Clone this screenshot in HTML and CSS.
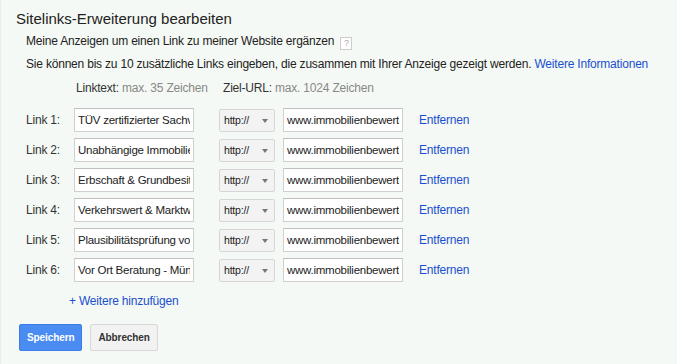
FILE: index.html
```html
<!DOCTYPE html>
<html lang="de">
<head>
    <meta charset="UTF-8">
    <title>Sitelinks-Erweiterung bearbeiten</title>
    <link rel="stylesheet" href="styles.css">
</head>
<body>
    <div class="panel">
        <h1>Sitelinks-Erweiterung bearbeiten</h1>
        <p class="intro">Meine Anzeigen um einen Link zu meiner Website ergänzen <span class="help">?</span></p>
        <p class="intro">Sie können bis zu 10 zusätzliche Links eingeben, die zusammen mit Ihrer Anzeige gezeigt werden. <a href="#">Weitere Informationen</a></p>

        <div class="links">
            <div class="hint hint-text"><b>Linktext:</b> max. 35 Zeichen</div>
            <div class="hint hint-url"><b>Ziel-URL:</b> max. 1024 Zeichen</div>

            <label>Link 1:</label>
            <input type="text" class="txt" value="TÜV zertifizierter Sachverständiger">
            <div class="sel">http://<span class="arrow"></span></div>
            <input type="text" class="txt" value="www.immobilienbewertung.de">
            <a href="#">Entfernen</a>

            <label>Link 2:</label>
            <input type="text" class="txt" value="Unabhängige Immobilienbewertung">
            <div class="sel">http://<span class="arrow"></span></div>
            <input type="text" class="txt" value="www.immobilienbewertung.de">
            <a href="#">Entfernen</a>

            <label>Link 3:</label>
            <input type="text" class="txt" value="Erbschaft &amp; Grundbesitz">
            <div class="sel">http://<span class="arrow"></span></div>
            <input type="text" class="txt" value="www.immobilienbewertung.de">
            <a href="#">Entfernen</a>

            <label>Link 4:</label>
            <input type="text" class="txt" value="Verkehrswert &amp; Marktwert">
            <div class="sel">http://<span class="arrow"></span></div>
            <input type="text" class="txt" value="www.immobilienbewertung.de">
            <a href="#">Entfernen</a>

            <label>Link 5:</label>
            <input type="text" class="txt" value="Plausibilitätsprüfung von Gutachten">
            <div class="sel">http://<span class="arrow"></span></div>
            <input type="text" class="txt" value="www.immobilienbewertung.de">
            <a href="#">Entfernen</a>

            <label>Link 6:</label>
            <input type="text" class="txt" value="Vor Ort Beratung - München">
            <div class="sel">http://<span class="arrow"></span></div>
            <input type="text" class="txt" value="www.immobilienbewertung.de">
            <a href="#">Entfernen</a>
        </div>

        <a href="#" class="add">+ Weitere hinzufügen</a>

        <div class="buttons">
            <button class="btn btn-blue">Speichern</button>
            <button class="btn">Abbrechen</button>
        </div>
    </div>
</body>
</html>
```

FILE: styles.css
```css
body {
    margin: 0;
    background: #fff;
    font-family: "Liberation Sans", Arial, sans-serif;
    color: #222;
}
a {
    color: #1a4fd0;
    text-decoration: none;
}
.panel {
    width: 677px;
    height: 364px;
    box-sizing: border-box;
    background: #f5f9f5;
    border-left: 1px solid #e9ede9;
    padding: 10px 0 0 15px;
    font-size: 12px;
    letter-spacing: -0.2px;
}
h1 {
    font-size: 15px;
    font-weight: normal;
    letter-spacing: 0;
    margin: 0 0 5px 0;
    line-height: 18px;
}
.intro {
    margin: 0 0 6px 10px;
    line-height: 16px;
}
.help {
    display: inline-block;
    width: 10px;
    height: 11px;
    border: 1px solid #ccc;
    background: #fff;
    color: #aaa;
    font-size: 9px;
    line-height: 11px;
    text-align: center;
    vertical-align: -1px;
    margin-left: 3px;
    letter-spacing: 0;
}
.links {
    display: grid;
    grid-template-columns: 48px 120px 25px 56px 8px 120px 16px auto;
    row-gap: 6px;
    margin: 9px 0 0 10px;
    align-items: center;
}
.hint {
    color: #888;
    margin-bottom: 3px;
    height: 18px;
}
.hint b {
    color: #333;
    font-weight: normal;
}
.hint-text {
    grid-column: 2 / 4;
    padding-left: 2px;
}
.hint-url {
    grid-column: 4 / 9;
    padding-left: 4px;
}
label {
    grid-column: 1;
    color: #333;
}
.links .txt:nth-of-type(odd) {
    grid-column: 2;
}
.txt {
    width: 120px;
    height: 24px;
    box-sizing: border-box;
    border: 1px solid #d0d0d0;
    border-top-color: #c0c0c0;
    background: #fff;
    font-family: "Liberation Sans", Arial, sans-serif;
    font-size: 11.5px;
    letter-spacing: -0.25px;
    color: #222;
    padding: 0 3px;
    margin: 0;
}
.txt + .sel + .txt {
    grid-column: 6;
}
.sel {
    grid-column: 4;
    height: 23px;
    box-sizing: border-box;
    border: 1px solid #d6d6d6;
    border-radius: 2px;
    background: #f3f3f3;
    font-size: 10.5px;
    line-height: 21px;
    padding-left: 4px;
    position: relative;
    color: #222;
}
.arrow {
    position: absolute;
    right: 6px;
    top: 9px;
    border-left: 3px solid transparent;
    border-right: 3px solid transparent;
    border-top: 4px solid #777;
}
.links a {
    grid-column: 8;
}
.add {
    display: inline-block;
    margin: 12px 0 0 53px;
}
.buttons {
    display: flex;
    gap: 8px;
    margin-top: 16px;
    margin-left: 3px;
}
.btn {
    height: 27px;
    padding: 0 7px;
    border: 1px solid #d8d8d8;
    border-radius: 2px;
    background: #f2f2f2;
    color: #333;
    font-family: "Liberation Sans", Arial, sans-serif;
    font-size: 10px;
    font-weight: bold;
    letter-spacing: -0.1px;
}
.btn-blue {
    background: #4a8cf2;
    border-color: #3b7ce8;
    color: #fff;
}
```
